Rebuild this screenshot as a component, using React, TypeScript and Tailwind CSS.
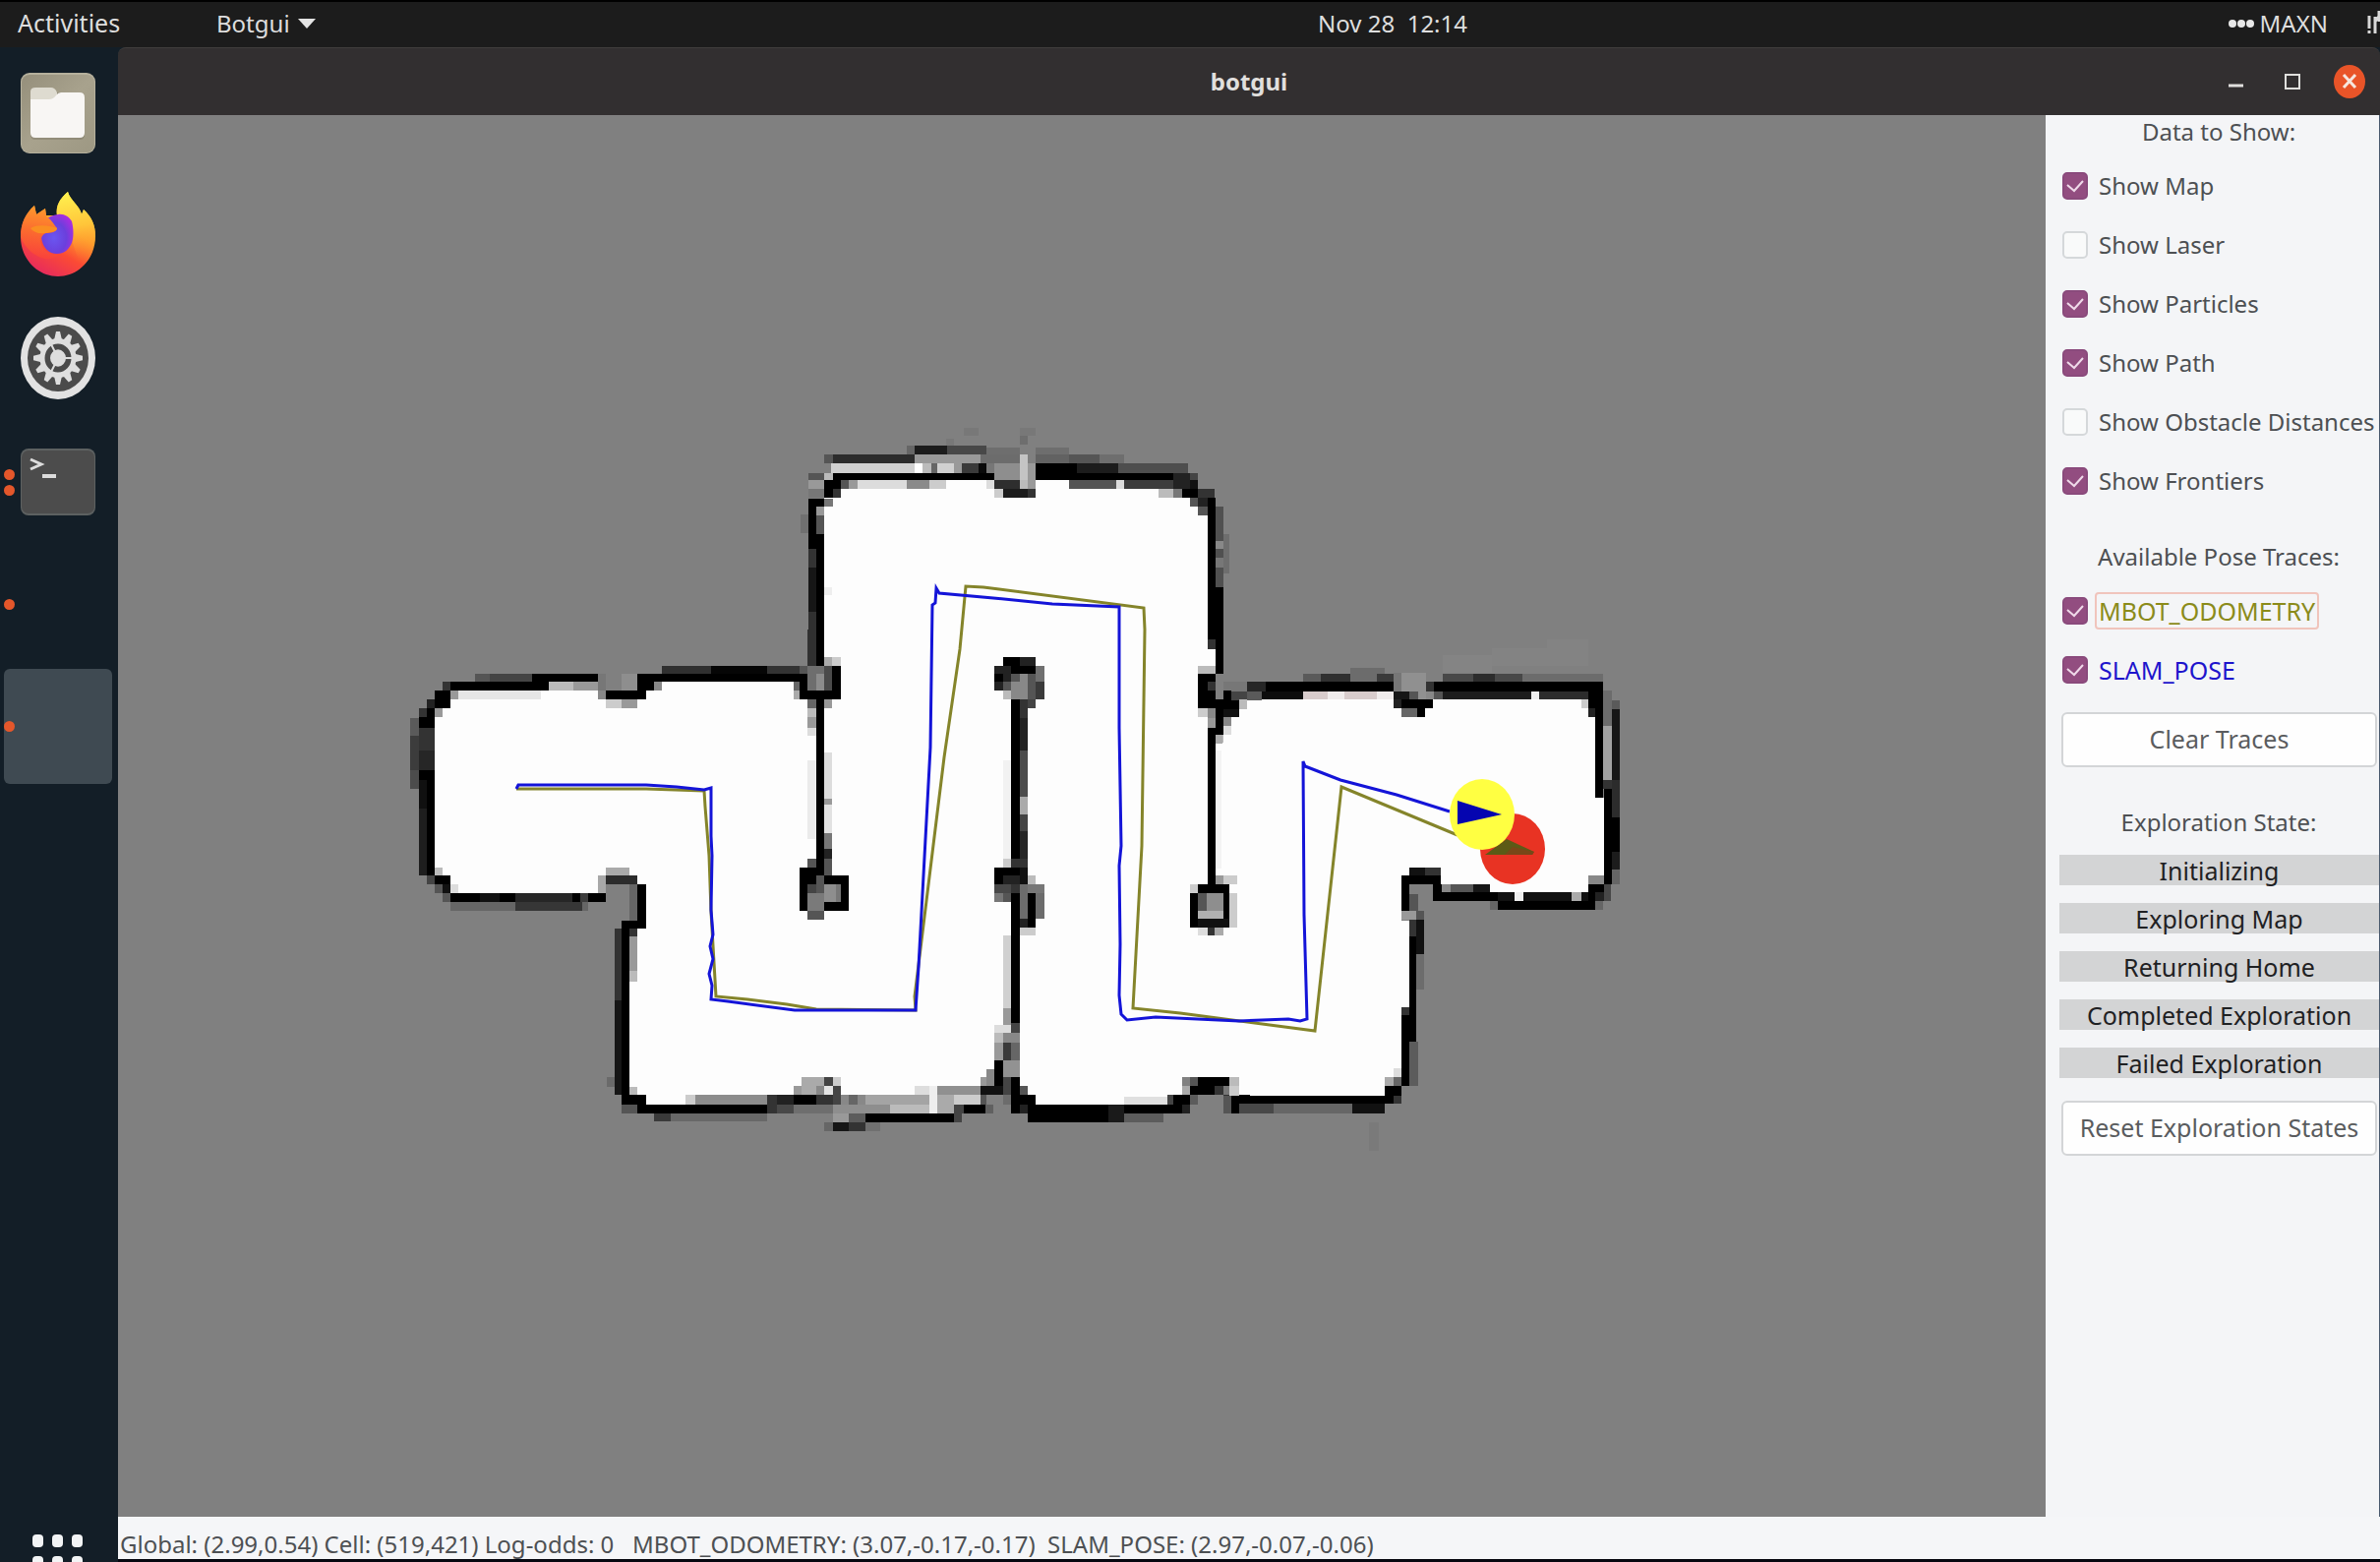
import { useState } from "react";

type Cell = [number, number, number, number, string?];

interface Patch {
  transform: string;
  free: Cell[];
  walls: Cell[];
}

/* Occupancy grid, stored as four patches. Each cell is [left, top, right, bottom, shade]. */
const patches: Patch[] = [
  {
    transform: "translate(410 640) scale(0.33333)",
    free: [
      [97, 268, 1259, 750], [119, 240, 1259, 268], [143, 187, 1259, 240], [765, 160, 1190, 187],
      [143, 750, 593, 803], [714, 750, 1382, 1395], [690, 912, 1382, 1420], [740, 1420, 1210, 1448],
      [1283, 110, 1382, 800],
    ],
    walls: [
      [392, 135, 593, 160], [220, 135, 392, 160, "#555"], [265, 135, 392, 160, "#444"], [119, 160, 443, 187],
      [443, 160, 520, 187, "#bbb"], [520, 160, 593, 187, "#999"], [593, 135, 617, 187, "#777"],
      [119, 160, 143, 187, "#333"], [72, 213, 143, 240], [97, 187, 143, 213],
      [143, 187, 168, 213, "#999"], [168, 187, 420, 213, "#e6e6e6"], [97, 240, 119, 268, "#999"],
      [47, 240, 97, 750], [47, 300, 97, 370, "#333"], [47, 370, 97, 430, "#262626"], [47, 460, 72, 545, "#101010"],
      [47, 545, 72, 750, "#1e1e1e"], [22, 270, 47, 325, "#5a5a5a"], [22, 325, 47, 430, "#3c3c3c"],
      [22, 430, 47, 485, "#4c4c4c"], [72, 213, 97, 240, "#222"], [47, 240, 72, 268, "#333"],
      [97, 725, 119, 750, "#bbb"], [97, 750, 143, 777], [119, 777, 143, 803, "#111"], [72, 750, 97, 777, "#444"],
      [97, 777, 119, 803, "#555"], [119, 803, 143, 830, "#555"], [143, 777, 168, 803, "#ddd"],
      [143, 803, 617, 830], [235, 803, 295, 830, "#111"], [343, 803, 515, 830, "#262626"], [540, 803, 565, 830, "#3c3c3c"],
      [143, 830, 343, 857, "#666"], [343, 830, 545, 857, "#363636"], [545, 830, 565, 857, "#666"],
      [617, 187, 740, 213], [617, 213, 665, 240, "#ccc"], [665, 213, 714, 240, "#999"], [593, 187, 617, 213, "#888"],
      [665, 135, 714, 187, "#8e8e8e"], [714, 135, 765, 187], [740, 135, 1234, 160], [790, 110, 940, 135, "#303030"],
      [940, 110, 1110, 135, "#060606"], [1110, 110, 1210, 135, "#333"], [765, 160, 790, 187, "#888"],
      [1190, 160, 1210, 187, "#666"], [1190, 187, 1210, 213, "#aaa"], [1210, 135, 1234, 213],
      [1234, 0, 1259, 110, "#333"], [1259, 0, 1283, 110], [1210, 110, 1234, 135, "#555"],
      [1234, 110, 1283, 187, "#6e6e6e"], [1259, 135, 1283, 187, "#8c8c8c"], [1234, 187, 1335, 213],
      [1308, 110, 1335, 213], [1283, 110, 1308, 187, "#4a4a4a"], [1283, 85, 1308, 110, "#aaa"], [1308, 85, 1335, 110, "#ccc"],
      [1234, 213, 1259, 240, "#666"], [1283, 213, 1308, 240, "#999"], [1259, 213, 1283, 750],
      [1234, 240, 1259, 268, "#bbb"], [1234, 268, 1259, 300, "#999"], [1234, 300, 1259, 325, "#ddd"],
      [1234, 400, 1259, 640, "#ebebeb"], [1283, 375, 1308, 515, "#ddd"], [1283, 515, 1308, 533, "#999"],
      [1283, 533, 1308, 620, "#e2e2e2"], [1283, 620, 1308, 670, "#777"], [1283, 670, 1308, 700, "#222"],
      [1234, 700, 1259, 725, "#555"], [1210, 725, 1259, 857], [1259, 750, 1359, 857], [1283, 700, 1308, 750, "#555"],
      [1259, 777, 1335, 830, "#777"], [1283, 777, 1320, 830, "#8e8e8e"], [1259, 750, 1283, 803, "#555"],
      [1234, 777, 1259, 803, "#444"], [1234, 803, 1283, 857, "#7a7a7a"], [1234, 857, 1283, 885, "#555"],
      [617, 725, 690, 750, "#aaa"], [593, 750, 617, 803, "#a8a8a8"], [617, 750, 714, 777, "#2c2c2c"],
      [690, 777, 714, 888, "#666"], [714, 777, 740, 912], [665, 888, 740, 912], [665, 912, 690, 1448],
      [645, 912, 665, 1130, "#333"], [645, 1130, 665, 1420, "#161616"], [690, 912, 714, 935, "#333"],
      [690, 935, 714, 1040, "#999"], [690, 1040, 714, 1075, "#bbb"], [620, 1365, 645, 1395, "#6a6a6a"],
      [690, 1395, 714, 1420, "#bbb"], [690, 1420, 740, 1448], [714, 1448, 740, 1475], [665, 1448, 714, 1475, "#555"],
      [740, 1448, 1110, 1475], [860, 1420, 890, 1448, "#ccc"], [890, 1420, 1110, 1448, "#8c8c8c"],
      [1110, 1420, 1190, 1475, "#333"], [1190, 1420, 1262, 1448], [765, 1475, 815, 1500, "#3a3a3a"],
      [815, 1475, 1110, 1500, "#686868"],
    ],
  },
  {
    transform: "translate(790 430) scale(0.33333)",
    free: [
      [145, 254, 1313, 962], [145, 228, 1259, 254], [195, 202, 1240, 254], [190, 175, 690, 202],
      [790, 175, 1165, 202], [1313, 690, 1337, 740],
    ],
    walls: [
      [395, 70, 420, 97, "#666"], [420, 70, 520, 97, "#1c1c1c"], [520, 70, 640, 97, "#484848"],
      [640, 75, 740, 97, "#6e6e6e"], [790, 75, 890, 97, "#6e6e6e"], [570, 15, 615, 40, "#787878"],
      [742, 15, 790, 40, "#787878"], [742, 40, 765, 65, "#6e6e6e"], [515, 48, 540, 70, "#787878"],
      [145, 97, 420, 124, "#2c2c2c"], [145, 97, 170, 124, "#555"], [420, 97, 620, 124, "#999"], [620, 97, 740, 124, "#6c6c6c"],
      [165, 124, 420, 152, "#d0d0d0"], [420, 124, 445, 152, "#fff"], [445, 124, 470, 152, "#bbb"],
      [470, 124, 490, 152, "#666"], [490, 124, 540, 152, "#d0d0d0"], [540, 124, 565, 152, "#999"],
      [565, 124, 615, 152, "#3a3a3a"], [615, 124, 640, 152, "#0a0a0a"], [640, 124, 663, 152, "#777"],
      [663, 124, 740, 175, "#8e8e8e"], [740, 97, 765, 175, "#c4c4c4"],
      [790, 97, 890, 124, "#626262"], [890, 97, 985, 124, "#555"], [985, 97, 1060, 124, "#6e6e6e"],
      [790, 124, 915, 152], [915, 124, 1040, 152, "#1c1c1c"], [1040, 124, 1255, 152, "#4e4e4e"],
      [95, 152, 145, 175, "#555"], [145, 152, 170, 175, "#bbb"], [170, 152, 663, 175],
      [765, 124, 790, 202, "#999"], [790, 152, 1210, 175], [1210, 152, 1259, 202, "#222"],
      [1259, 152, 1285, 175, "#444"], [1259, 175, 1285, 202, "#111"],
      [95, 175, 145, 202, "#999"], [95, 202, 145, 228, "#777"], [145, 175, 195, 202], [145, 202, 170, 228],
      [170, 202, 195, 228, "#333"], [195, 175, 220, 202, "#555"], [220, 175, 245, 202, "#999"],
      [245, 175, 395, 202, "#dcdcdc"], [395, 175, 465, 202, "#8a8a8a"], [465, 175, 515, 202, "#ccc"],
      [640, 175, 663, 202, "#ddd"], [663, 175, 740, 202, "#2e2e2e"], [740, 175, 765, 202, "#bbb"],
      [663, 202, 690, 228, "#ccc"], [690, 202, 765, 228, "#1c1c1c"], [765, 202, 790, 228, "#333"],
      [890, 175, 1035, 202, "#555"], [1035, 175, 1060, 202, "#ddd"], [1060, 175, 1210, 202, "#3c3c3c"],
      [1165, 202, 1210, 228, "#bbb"], [1210, 202, 1235, 228, "#777"], [1235, 202, 1285, 228],
      [1285, 202, 1335, 228, "#333"], [1259, 228, 1285, 254, "#555"], [1285, 228, 1313, 254, "#222"],
      [1285, 254, 1313, 282, "#555"], [1313, 228, 1337, 660], [1313, 660, 1337, 690, "#333"],
      [1337, 254, 1361, 500, "#505050"], [1337, 360, 1361, 385, "#888"], [1337, 410, 1361, 440, "#777"],
      [1337, 500, 1361, 765], [1361, 340, 1380, 460, "#6e6e6e"],
      [95, 230, 145, 254], [145, 230, 170, 254, "#777"], [95, 254, 119, 385], [119, 254, 145, 282, "#999"],
      [119, 282, 145, 340, "#555"], [119, 340, 145, 740], [95, 385, 119, 440, "#333"], [95, 440, 119, 575, "#161616"],
      [95, 575, 119, 740, "#303030"], [72, 280, 95, 335, "#707070"], [145, 500, 168, 525, "#eee"],
      [690, 715, 740, 740], [740, 715, 790, 740, "#222"], [663, 740, 715, 817, "#222"], [663, 765, 690, 790],
      [715, 740, 790, 765], [790, 740, 815, 790, "#707070"], [715, 765, 765, 843, "#888"], [715, 765, 740, 790, "#555"],
      [765, 765, 790, 843, "#555"], [790, 790, 815, 843, "#3a3a3a"], [690, 790, 715, 817, "#555"],
      [690, 817, 715, 843, "#bbb"], [715, 843, 740, 962], [740, 843, 765, 900, "#333"], [740, 900, 765, 962, "#222"],
      [765, 843, 790, 870, "#444"],
      [1285, 740, 1337, 765, "#bbb"], [1285, 765, 1337, 870], [1313, 790, 1337, 817, "#333"],
      [1337, 790, 1361, 843, "#808080"], [1361, 790, 1385, 817, "#777"], [1385, 790, 1440, 817, "#333"],
      [1361, 817, 1410, 870], [1285, 870, 1313, 897, "#ccc"], [1313, 870, 1337, 930, "#888"], [1337, 843, 1361, 962],
      [1361, 870, 1410, 897, "#1a1a1a"], [1313, 930, 1337, 962],
    ],
  },
  {
    transform: "translate(790 730) scale(0.33333)",
    free: [
      [145, 0, 717, 1095], [0, 640, 200, 1095], [0, 1095, 640, 1122], [0, 1122, 490, 1150],
      [740, 0, 1313, 1095], [1313, 640, 1440, 1095], [1337, 60, 1440, 640], [740, 1095, 1235, 1180], [1385, 1095, 1440, 1122],
    ],
    walls: [
      [715, 0, 740, 460], [740, 0, 765, 100, "#222"], [740, 100, 765, 240, "#4c4c4c"], [740, 240, 765, 295, "#aaa"],
      [740, 295, 765, 345, "#444"], [740, 345, 765, 460, "#262626"], [690, 130, 715, 430, "#f2f2f2"],
      [690, 430, 715, 457, "#ccc"], [715, 430, 765, 457, "#333"], [663, 457, 740, 480], [740, 457, 765, 507, "#111"],
      [663, 480, 690, 507], [690, 480, 740, 507, "#222"], [663, 507, 715, 533, "#484848"], [715, 507, 740, 533, "#333"],
      [663, 533, 690, 560, "#777"], [690, 533, 715, 560, "#555"], [765, 480, 790, 507, "#bbb"],
      [740, 507, 765, 613, "#6c6c6c"], [765, 507, 815, 533, "#777"], [790, 533, 815, 613, "#6c6c6c"],
      [765, 533, 790, 640], [740, 613, 765, 640, "#222"], [715, 533, 740, 930], [740, 640, 790, 664, "#ccc"],
      [690, 664, 715, 885, "#d0d0d0"], [690, 885, 715, 935, "#999"], [663, 935, 715, 960, "#ddd"],
      [715, 930, 740, 960, "#444"], [663, 960, 690, 990, "#bbb"], [690, 960, 740, 990, "#888"],
      [663, 990, 690, 1045, "#999"], [690, 990, 715, 1045, "#3a3a3a"], [715, 990, 740, 1045, "#666"],
      [690, 1045, 740, 1095, "#929292"], [663, 1045, 690, 1122], [640, 1070, 663, 1122, "#888"],
      [620, 1095, 640, 1122, "#999"], [620, 1122, 690, 1150, "#111"], [690, 1095, 715, 1150, "#444"],
      [715, 1095, 740, 1205], [740, 1122, 765, 1150, "#555"], [740, 1150, 790, 1180], [740, 1180, 765, 1205, "#222"],
      [690, 1150, 715, 1180, "#6c6c6c"], [765, 1180, 1235, 1205], [765, 1205, 1060, 1232], [1010, 1180, 1060, 1232, "#1a1a1a"],
      [1060, 1205, 1180, 1232, "#5c5c5c"], [1210, 1150, 1259, 1180], [1235, 1180, 1259, 1205, "#222"],
      [1060, 1155, 1190, 1180, "#e0e0e0"], [1190, 1150, 1210, 1180, "#444"], [1235, 1122, 1259, 1150, "#aaa"],
      [1259, 1122, 1335, 1150], [1335, 1122, 1361, 1150, "#333"], [1285, 1095, 1380, 1122], [1259, 1095, 1285, 1122, "#555"],
      [1259, 1150, 1285, 1178, "#5c5c5c"], [1361, 1122, 1385, 1150, "#777"], [1361, 1150, 1385, 1205, "#333"],
      [1385, 1095, 1410, 1150, "#aaa"], [1380, 1150, 1442, 1178], [1385, 1178, 1410, 1205],
      [0, 1150, 50, 1178, "#222"], [50, 1150, 120, 1178], [120, 1150, 170, 1178, "#333"], [0, 1178, 50, 1205, "#484848"],
      [50, 1178, 170, 1205, "#6e6e6e"], [75, 1095, 145, 1150, "#aaa"], [50, 1122, 75, 1150, "#999"], [120, 1122, 145, 1150, "#888"],
      [145, 1095, 170, 1122, "#444"], [145, 1122, 170, 1150, "#e4e4e4"], [170, 1095, 195, 1122, "#ccc"],
      [170, 1122, 195, 1178, "#444"], [195, 1150, 270, 1178, "#888"], [220, 1150, 245, 1178, "#666"],
      [270, 1150, 465, 1178, "#a4a4a4"], [170, 1178, 345, 1205, "#8e8e8e"], [345, 1178, 465, 1205, "#bbb"],
      [420, 1122, 465, 1150, "#ddd"], [465, 1122, 490, 1205, "#eee"], [490, 1122, 620, 1150, "#909090"],
      [490, 1150, 540, 1205, "#aaa"], [540, 1150, 620, 1178, "#ccc"], [540, 1178, 570, 1205, "#444"],
      [570, 1178, 635, 1205], [170, 1205, 220, 1232, "#999"], [220, 1205, 270, 1232, "#5c5c5c"], [270, 1205, 540, 1232],
      [540, 1205, 565, 1232, "#444"], [145, 1232, 170, 1260, "#666"], [170, 1232, 220, 1260, "#161616"],
      [220, 1232, 270, 1260, "#333"], [270, 1232, 315, 1260, "#707070"], [635, 1178, 660, 1205, "#606060"],
      [620, 1150, 640, 1178, "#555"],
      [1313, 0, 1337, 30, "#999"], [1337, 0, 1361, 50], [1313, 30, 1337, 507], [1337, 50, 1361, 75, "#bbb"],
      [1337, 100, 1357, 460, "#f4f4f4"], [1337, 480, 1361, 507, "#999"], [1361, 480, 1405, 507, "#ccc"],
      [1259, 507, 1285, 533, "#ccc"], [1285, 507, 1380, 533], [1259, 533, 1285, 640], [1361, 507, 1380, 640],
      [1285, 533, 1310, 588, "#555"], [1285, 588, 1361, 613, "#b0b0b0"], [1310, 533, 1361, 588, "#8e8e8e"],
      [1285, 613, 1380, 640, "#111"], [1313, 640, 1335, 664, "#333"], [1335, 640, 1361, 664, "#aaa"],
      [1285, 640, 1313, 664, "#ddd"], [1380, 533, 1405, 640, "#ccc"],
    ],
  },
  {
    transform: "translate(1220 620) scale(0.33333 0.35714)",
    free: [
      [70, 305, 1205, 780], [120, 255, 1205, 310], [145, 232, 590, 255], [1200, 535, 1232, 780], [885, 780, 1185, 805],
      [115, 600, 615, 1330], [615, 885, 640, 1130], [120, 1330, 565, 1383],
    ],
    walls: [
      [890, 110, 1060, 160, "#838383"], [1060, 85, 1185, 160, "#838383"], [740, 130, 890, 180, "#848484"],
      [95, 205, 145, 232, "#777"], [145, 205, 200, 232, "#262626"], [200, 205, 590, 232], [315, 182, 370, 205, "#5a5a5a"],
      [370, 182, 460, 205, "#303030"], [460, 165, 565, 182, "#6c6c6c"], [460, 182, 540, 205, "#6c6c6c"],
      [540, 182, 590, 205, "#3a3a3a"], [95, 232, 145, 257, "#444"], [145, 232, 190, 257, "#5a5a5a"], [190, 232, 315, 255, "#0c0c0c"],
      [315, 232, 590, 255, "#d8cccc"], [390, 232, 440, 255, "#f0ecec"], [540, 232, 590, 255, "#f0ecec"],
      [120, 255, 145, 282, "#bbb"], [47, 257, 120, 282], [70, 282, 120, 305, "#111"], [47, 280, 72, 357],
      [72, 305, 95, 330, "#888"], [72, 330, 95, 357, "#ddd"], [47, 357, 70, 380, "#aaa"],
      [590, 180, 615, 232, "#777"], [615, 180, 690, 255, "#909090"], [590, 232, 640, 255, "#161616"],
      [640, 232, 665, 255, "#555"], [590, 255, 615, 280, "#222"], [615, 255, 712, 280], [615, 280, 663, 305, "#666"],
      [663, 280, 688, 305], [690, 205, 715, 232, "#333"], [690, 232, 715, 255, "#888"], [715, 205, 1185, 232],
      [740, 182, 985, 205, "#484848"], [835, 182, 900, 205, "#2c2c2c"], [985, 182, 1230, 205, "#6c6c6c"],
      [715, 232, 740, 255, "#555"], [740, 232, 1010, 255, "#1c1c1c"], [1010, 232, 1035, 255, "#eee"],
      [1035, 232, 1185, 255, "#2c2c2c"], [1165, 255, 1185, 280, "#ccc"], [1185, 280, 1205, 305, "#222"],
      [1185, 205, 1230, 280], [1205, 280, 1230, 535], [1230, 230, 1257, 330, "#6c6c6c"], [1230, 330, 1257, 485, "#a2a2a2"],
      [1257, 257, 1281, 282, "#5a5a5a"], [1257, 282, 1281, 485, "#161616"], [1230, 485, 1257, 510, "#333"],
      [1232, 510, 1257, 780], [1257, 485, 1281, 590, "#2c2c2c"], [1257, 590, 1281, 690], [1257, 690, 1281, 740, "#1c1c1c"],
      [1257, 740, 1281, 780, "#666"], [1185, 755, 1232, 780, "#888"], [1185, 780, 1232, 805], [1205, 805, 1232, 830, "#222"],
      [1232, 780, 1255, 830, "#484848"], [1185, 805, 1205, 855], [910, 830, 1205, 855], [1205, 830, 1230, 855, "#666"],
      [885, 805, 1185, 830, "#111"], [960, 805, 988, 830, "#eee"], [1135, 805, 1165, 830, "#aaa"],
      [735, 780, 765, 805, "#888"], [765, 780, 835, 805, "#555"], [835, 780, 885, 805, "#161616"], [735, 805, 910, 830],
      [885, 830, 910, 855, "#666"], [640, 735, 735, 757, "#111"], [688, 735, 735, 757, "#333"], [615, 757, 735, 780],
      [712, 780, 737, 830], [615, 780, 640, 857], [640, 780, 712, 870, "#808080"], [640, 810, 665, 857, "#555"],
      [615, 857, 660, 883, "#999"], [640, 883, 660, 1230], [660, 883, 685, 980, "#111"], [660, 857, 685, 883, "#555"],
      [640, 883, 660, 930, "#333"], [660, 980, 685, 1080, "#6c6c6c"], [615, 1130, 640, 1355], [615, 1130, 640, 1155, "#333"],
      [640, 1230, 665, 1355, "#5c5c5c"], [565, 1330, 590, 1355, "#aaa"], [590, 1330, 615, 1355, "#666"],
      [590, 1305, 615, 1330, "#ddd"], [565, 1355, 615, 1383], [565, 1383, 590, 1407], [590, 1383, 615, 1407, "#333"],
      [95, 1383, 565, 1407], [120, 1407, 225, 1433, "#484848"], [225, 1407, 465, 1433, "#666"], [465, 1407, 565, 1433, "#111"],
      [72, 1383, 95, 1433, "#555"], [95, 1407, 120, 1433], [90, 1330, 120, 1355, "#bbb"], [90, 1355, 120, 1383, "#ccc"],
      [515, 1460, 545, 1540, "#7a7a7a"],
    ],
  },
];

const odometryTrace =
  "525,802 657,802 716,804 717,820 721,870 723,927 728,1013 760,1016 800,1021 830,1026 931,1027 930,1013 960,770 976,660 982,596 1000,597 1163,618 1164,640 1161,860 1152,1025 1200,1030 1337,1048 1364,800 1482,849";
const slamTrace =
  "525,802 527,798 657,798 688,800 716,803 723,801 723,850 724,870 723,925 725,950 722,962 725,975 721,990 724,1002 723,1016 740,1018 808,1027 931,1027 934,983 946,760 948,615 951,613 952,598 955,603 1010,608 1070,614 1138,617 1138,740 1140,860 1138,880 1139,960 1138,1012 1140,1031 1146,1037 1175,1034 1260,1038 1310,1036 1322,1038 1329,1036 1326,930 1325,774 1327,779 1363,793 1420,808 1474,825";

function CellRect({ cell }: { cell: Cell }) {
  const [x1, y1, x2, y2, shade = "#000"] = cell;
  return <rect x={x1} y={y1} width={x2 - x1} height={y2 - y1} fill={shade} />;
}

function MapView() {
  return (
    <svg viewBox="120 117 1960 1425" className="block h-full w-full" role="img" aria-label="Occupancy map">
      {patches.map((p) => (
        <g key={p.transform} transform={p.transform} shapeRendering="crispEdges">
          {p.free.map(([a, b, c, d], i) => (
            <rect key={i} x={a} y={b} width={c - a} height={d - b} fill="#fdfdfd" />
          ))}
        </g>
      ))}
      {patches.map((p) => (
        <g key={p.transform} transform={p.transform} shapeRendering="crispEdges">
          {p.walls.map((cell, i) => (
            <CellRect key={i} cell={cell} />
          ))}
        </g>
      ))}
      <polyline points={odometryTrace} fill="none" stroke="#84842a" strokeWidth="3" />
      <polyline points={slamTrace} fill="none" stroke="#1414d8" strokeWidth="3" />
      <ellipse cx="1538" cy="863" rx="33" ry="36" fill="#e83323" />
      <path d="M1510 869L1532 853L1560 866L1558 869Z" fill="#5c5a16" />
      <path d="M1538 861L1560 866L1558 869L1530 869Z" fill="#8a3a1a" opacity="0.6" />
      <ellipse cx="1507" cy="828" rx="33" ry="36" fill="#ffff42" />
      <path d="M1482 814L1527 828L1482 838Z" fill="#0505b0" />
    </svg>
  );
}

function FilesIcon() {
  return (
    <svg viewBox="0 0 76 82" className="h-[82px] w-[76px]">
      <defs>
        <linearGradient id="filesBg" x1="0" y1="0" x2="1" y2="1">
          <stop offset="0" stopColor="#958f7b" />
          <stop offset="0.5" stopColor="#a8a28d" />
          <stop offset="1" stopColor="#9d9883" />
        </linearGradient>
      </defs>
      <rect x="0" y="0" width="76" height="82" rx="9" fill="#b5b09c" />
      <rect x="1" y="2" width="74" height="79" rx="8" fill="url(#filesBg)" />
      <path d="M10 20Q10 15 15 15H31Q35 15 37 20H60Q65 20 65 26V63Q65 68 60 68H15Q10 68 10 63Z" fill="#7f7a68" opacity="0.5" />
      <path d="M10 19Q10 15 15 15H31Q35 15 37 20V30H10Z" fill="#dedbd0" />
      <path d="M10 27H29Q33 27 36 23Q38 20 41 20H60Q65 20 65 25V61Q65 66 60 66H15Q10 66 10 61Z" fill="#f8f6f4" />
    </svg>
  );
}

function FirefoxIcon() {
  return (
    <svg viewBox="0 0 76 86" className="h-[86px] w-[76px]">
      <defs>
        <linearGradient id="ffBody" x1="0.75" y1="0.1" x2="0.3" y2="1">
          <stop offset="0" stopColor="#ffe03e" />
          <stop offset="0.35" stopColor="#ffa42a" />
          <stop offset="0.65" stopColor="#fb4b34" />
          <stop offset="1" stopColor="#e6295f" />
        </linearGradient>
        <linearGradient id="ffTail" x1="0.4" y1="0" x2="0.5" y2="1">
          <stop offset="0" stopColor="#fff14f" />
          <stop offset="0.5" stopColor="#ffc53a" />
          <stop offset="1" stopColor="#ff7a2c" stopOpacity="0" />
        </linearGradient>
        <linearGradient id="ffHead" x1="0.5" y1="0" x2="0.4" y2="1">
          <stop offset="0" stopColor="#ff9a2c" />
          <stop offset="0.5" stopColor="#fb6a2f" />
          <stop offset="1" stopColor="#f93f3c" />
        </linearGradient>
        <radialGradient id="ffGlobe" cx="0.4" cy="0.6" r="0.65">
          <stop offset="0" stopColor="#6a56f0" />
          <stop offset="0.6" stopColor="#6b3fdc" />
          <stop offset="1" stopColor="#a52ee0" />
        </radialGradient>
      </defs>
      <path d="M37 24C35 13 42 5 48 0C50 8 60 14 62 23L64 18C72 25 76 34 76 45C76 68 59 86 38 86C17 86 0 68 0 46C0 32 5 22 14 14L16 23L25 17L26 24Z" fill="url(#ffBody)" />
      <path d="M37 24C35 13 42 5 48 0C50 8 60 14 62 23L64 18C72 25 76 34 76 45C75 58 70 66 60 70C54 60 52 40 37 26Z" fill="url(#ffTail)" />
      <path d="M21 46C20 33 26 24 38 23C44 22 49 25 52 30C54 38 54 46 52 52C49 59 44 63 37 63C28 63 22 56 21 46Z" fill="url(#ffGlobe)" />
      <path d="M0 46C0 32 5 22 14 14L16 23L25 17L26 25C31 28 33 32 37 37C37 41 30 42 26 42C22 43 21 47 20 50C22 60 29 64 38 64C30 74 8 66 0 46Z" fill="url(#ffHead)" />
      <path d="M10 37C17 33 28 34 37 37C37 41 30 41 25 42C18 43 13 41 10 37Z" fill="#fa8f22" />
    </svg>
  );
}

function SettingsIcon() {
  return (
    <svg viewBox="0 0 76 84" className="h-[84px] w-[76px]">
      <ellipse cx="38" cy="42" rx="38" ry="42" fill="#e2e2e2" />
      <ellipse cx="38" cy="42" rx="31" ry="34" fill="#4b4b4b" />
      <g transform="translate(38 42) scale(1 1.080)">
        {[0, 30, 60, 90, 120, 150, 180, 210, 240, 270, 300, 330].map((angle) => (
          <path key={angle} d="M-4 -17L-2 -25H2L4 -17Z" fill="#dedede" transform={`rotate(${angle})`} />
        ))}
        <circle r="16" fill="none" stroke="#dedede" strokeWidth="5" />
        <circle r="8" fill="#dedede" />
        <path d="M0 0H15M0 0L-7 -13M0 0L-7 13" stroke="#dedede" strokeWidth="2" />
      </g>
    </svg>
  );
}

function TerminalIcon() {
  return (
    <svg viewBox="0 0 76 68" className="h-[68px] w-[76px]">
      <rect x="0" y="0" width="76" height="68" rx="8" fill="#5d6161" />
      <rect x="1" y="2" width="74" height="64" rx="7" fill="#4c4c4c" />
      <path d="M10 11L21 16L10 21" fill="none" stroke="#dcdcdc" strokeWidth="3" />
      <rect x="22" y="26" width="14" height="4" fill="#dcdcdc" />
    </svg>
  );
}

function Dock() {
  const dot = "size-[11px] rounded-full bg-[#e4572b]";
  return (
    <nav aria-label="Dock" className="flex w-[120px] shrink-0 flex-col overflow-hidden bg-[#131e27] pt-[3px]">
      <button aria-label="Files" className="flex h-[124px] shrink-0 items-center pt-1 pl-[21px]">
        <FilesIcon />
      </button>
      <button aria-label="Firefox" className="flex h-[126px] shrink-0 items-center pl-[21px]">
        <FirefoxIcon />
      </button>
      <button aria-label="Settings" className="flex h-[126px] shrink-0 items-center pl-[21px]">
        <SettingsIcon />
      </button>
      <button aria-label="Terminal" className="flex h-[126px] shrink-0 items-center pl-[4px]">
        <span className="flex w-[17px] flex-col gap-[5px]">
          <span className={dot} />
          <span className={dot} />
        </span>
        <TerminalIcon />
      </button>
      <button aria-label="Background application" className="flex h-[122px] shrink-0 items-center pl-[4px]">
        <span className={dot} />
      </button>
      <button aria-label="Botgui" className="mt-[5px] ml-[4px] flex h-[117px] w-[110px] shrink-0 items-center rounded-md bg-[#3f4a52]">
        <span className={dot} />
      </button>
      <button aria-label="Show Applications" className="mt-auto grid h-[28px] shrink-0 grid-cols-[11px_11px_11px] content-start gap-x-[9px] gap-y-[9px] overflow-hidden pl-[33px]">
        {[0, 1, 2, 3, 4, 5].map((n) => (
          <span key={n} className="h-[13px] rounded-[4px] bg-[#f2f4f5]" />
        ))}
      </button>
    </nav>
  );
}

function TopBar() {
  return (
    <header className="flex h-12 shrink-0 items-center overflow-hidden border-t-2 border-black bg-[#1c1c1c] pb-[2px] text-[24px] text-[#dedede]">
      <div className="flex flex-1 items-center pl-[18px]">
        <button className="w-[202px] text-left text-[25px]">Activities</button>
        <button className="flex items-center gap-2">
          Botgui
          <svg viewBox="0 0 18 10" className="h-[10px] w-[18px]">
            <path d="M0 0H18L9 10Z" fill="#e4e4e4" />
          </svg>
        </button>
      </div>
      <button className="whitespace-pre">Nov 28  12:14</button>
      <div className="flex w-[928px] items-center justify-end gap-[39px]">
        <button className="flex items-center gap-[6px]">
          <svg viewBox="0 0 26 8" className="h-2 w-[26px]">
            <circle cx="4" cy="4" r="4" fill="#e8e8e8" />
            <circle cx="13" cy="4" r="4" fill="#e8e8e8" />
            <circle cx="22" cy="4" r="4" fill="#e8e8e8" />
          </svg>
          MAXN
        </button>
        <svg viewBox="0 0 14 28" className="h-7 w-[14px]" aria-label="Network">
          <path d="M3 6V19M3 21V24M9 7V24M9 12L14 5M13 1V12" fill="none" stroke="#d8d8d8" strokeWidth="3" />
        </svg>
      </div>
    </header>
  );
}

function TitleBar() {
  return (
    <div className="grid h-[69px] shrink-0 grid-cols-[1fr_auto_1fr] items-center rounded-t-lg border-t border-[#403e3d] bg-[#322f30] text-[24px] font-bold text-[#e0dfdd]">
      <span />
      <h1>botgui</h1>
      <div className="flex items-center justify-end pr-[15px]">
        <button aria-label="Minimize" className="mr-[42px]">
          <svg viewBox="0 0 15 16" className="h-4 w-[15px]">
            <path d="M0 12H15" stroke="#e0dfdd" strokeWidth="3" />
          </svg>
        </button>
        <button aria-label="Maximize" className="mr-[34px]">
          <svg viewBox="0 0 16 16" className="size-4">
            <path d="M1 1H15V15H1Z" fill="none" stroke="#e0dfdd" strokeWidth="2" />
          </svg>
        </button>
        <button aria-label="Close">
          <svg viewBox="0 0 32 34" className="h-[34px] w-8">
            <ellipse cx="16" cy="17" rx="16" ry="17" fill="#e95428" />
            <path d="M10 10L22 23M22 10L10 23" stroke="#f6e6de" strokeWidth="3" />
          </svg>
        </button>
      </div>
    </div>
  );
}

interface CheckProps {
  label: string;
  initial?: boolean;
  labelClass?: string;
}

function Check({ label, initial = false, labelClass = "" }: CheckProps) {
  const [on, setOn] = useState(initial);
  return (
    <label className="flex h-[36px] items-center gap-[7px] pl-[17px] whitespace-nowrap">
      <span className="grid shrink-0">
        <input
          type="checkbox"
          checked={on}
          onChange={(e) => setOn(e.target.checked)}
          className="h-7 w-[26px] appearance-none rounded-[5px] border-2 border-[#d5d8da] bg-[#f9fafa] [grid-area:1/1] checked:border-[#8a4a7c] checked:bg-[#924d80]"
        />
        {on && (
          <svg viewBox="0 0 26 28" className="pointer-events-none h-7 w-[26px] [grid-area:1/1]">
            <path d="M5 13L12 19L21 9" fill="none" stroke="#efd9e9" strokeWidth="2" />
          </svg>
        )}
      </span>
      <span className={`rounded-[4px] border-2 px-[2px] ${labelClass || "border-transparent"}`}>{label}</span>
    </label>
  );
}

const states = ["Initializing", "Exploring Map", "Returning Home", "Completed Exploration", "Failed Exploration"];

function Sidebar() {
  const button = "ml-4 mr-[2px] h-[56px] shrink-0 rounded-md border-2 border-[#d3d5d7] bg-[#fefefe] text-[25px] text-[#5a5c5e]";
  const heading = "pl-[13px] text-center leading-[30px]";
  return (
    <aside className="flex w-[340px] shrink-0 flex-col overflow-hidden border-r border-[#4a5a6e] bg-[#f4f5f7]">
      <h2 className={`mt-[2px] ${heading}`}>Data to Show:</h2>
      <div className="mt-[22px] flex flex-col gap-[24px] leading-[30px]">
        <Check label="Show Map" initial />
        <Check label="Show Laser" />
        <Check label="Show Particles" initial />
        <Check label="Show Path" initial />
        <Check label="Show Obstacle Distances" />
        <Check label="Show Frontiers" initial />
      </div>
      <h2 className={`mt-[44px] ${heading}`}>Available Pose Traces:</h2>
      <div className="mt-[22px] flex flex-col gap-[24px] leading-[34px]">
        <Check label="MBOT_ODOMETRY" initial labelClass="border-[#f0c4bc] text-[25px] text-[#8b8b1a]" />
        <Check label="SLAM_POSE" initial labelClass="border-transparent text-[25px] text-[#1e14cc]" />
      </div>
      <button className={`mt-[25px] ${button}`}>Clear Traces</button>
      <h2 className={`mt-[41px] ${heading}`}>Exploration State:</h2>
      <ul className="mt-[18px] ml-[14px] flex flex-col gap-[18px] text-center text-[25px] leading-[32px] text-[#1f2123]">
        {states.map((s) => (
          <li key={s} className="h-[31px] bg-[#d3d4d5]">
            {s}
          </li>
        ))}
      </ul>
      <button className={`mt-[23px] ${button}`}>Reset Exploration States</button>
    </aside>
  );
}

export default function App() {
  return (
    <div className="flex h-screen flex-col overflow-hidden bg-[#1c1c1c] font-['Noto_Sans','Open_Sans',sans-serif] text-[24px] text-[#4d5053]">
      <TopBar />
      <div className="flex min-h-0 flex-1">
        <Dock />
        <div className="flex min-w-0 flex-1 flex-col bg-[#131e27]">
          <TitleBar />
          <div className="flex min-h-0 flex-1">
            <main className="min-w-0 flex-1 bg-[#808080]">
              <MapView />
            </main>
            <Sidebar />
          </div>
          <footer className="flex h-[46px] shrink-0 items-center overflow-hidden border-b-3 border-[#05060f] bg-[#f5f6f8] pt-3 pl-[2px] leading-[30px] whitespace-pre">
            {"Global: (2.99,0.54) Cell: (519,421) Log-odds: 0   MBOT_ODOMETRY: (3.07,-0.17,-0.17)  SLAM_POSE: (2.97,-0.07,-0.06)"}
          </footer>
        </div>
      </div>
    </div>
  );
}
